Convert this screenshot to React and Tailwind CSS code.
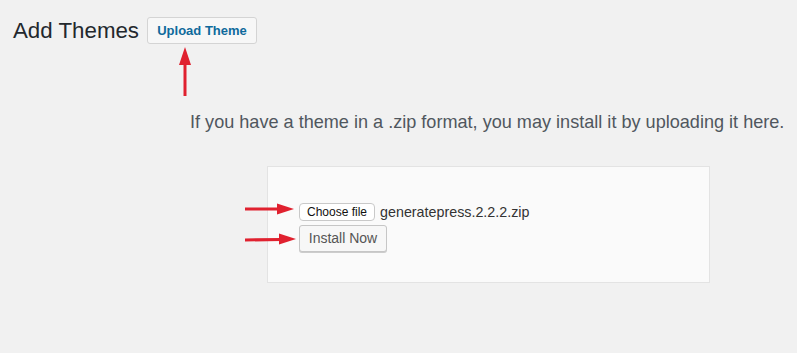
export default function App() {
  return (
    <div
      className="relative h-[353px] w-full overflow-hidden bg-[#f1f1f1]"
      style={{ fontFamily: '"Liberation Sans", Arial, sans-serif' }}
    >
      {/* Header */}
      <div className="flex items-center gap-[8px] pl-[13px] pt-[17px]">
        <h1 className="text-[22.3px] leading-[27px] text-[#23282d]">Add Themes</h1>
        <button className="h-[27px] w-[110px] rounded-[3px] border border-[#d4d4d4] bg-[#f7f7f7] text-[13px] font-bold text-[#0f6a9c]">
          Upload Theme
        </button>
      </div>

      {/* Description */}
      <p className="ml-[190px] mt-[66px] text-[18.1px] leading-[24px] text-[#50575e]">
        If you have a theme in a .zip format, you may install it by uploading it here.
      </p>

      {/* Upload box */}
      <div className="ml-[267px] mt-[32px] h-[117px] w-[443px] border border-[#e3e3e3] bg-[#fafafa] pl-[31px] pt-[36px]">
        <div className="flex items-center gap-[5px]">
          <button className="h-[18px] rounded-[4px] border border-[#c9c9c9] bg-white px-[7px] text-[12px] leading-[15px] text-[#111]">
            Choose file
          </button>
          <span className="text-[14.3px] leading-[18px] text-[#333]">generatepress.2.2.2.zip</span>
        </div>
        <button className="mt-[4px] h-[27px] w-[88px] rounded-[3px] border border-[#c6c6c6] bg-[#f7f7f7] text-[14px] text-[#555] shadow-[0_1px_0_#ccc]">
          Install Now
        </button>
      </div>

      {/* Annotation arrows */}
      <svg className="absolute left-0 top-0" width="797" height="353">
        <g fill="#e0212f" stroke="#e0212f">
          <line x1="185" y1="96" x2="185" y2="62" strokeWidth="3" />
          <polygon points="185,47 179,65 191,65" stroke="none" />
          <line x1="245" y1="209" x2="280" y2="209" strokeWidth="3" />
          <polygon points="294,209 277,203.5 277,214.5" stroke="none" />
          <line x1="245" y1="240" x2="281" y2="239.5" strokeWidth="3" />
          <polygon points="296,239 279,233.5 279,244.5" stroke="none" />
        </g>
      </svg>
    </div>
  )
}
